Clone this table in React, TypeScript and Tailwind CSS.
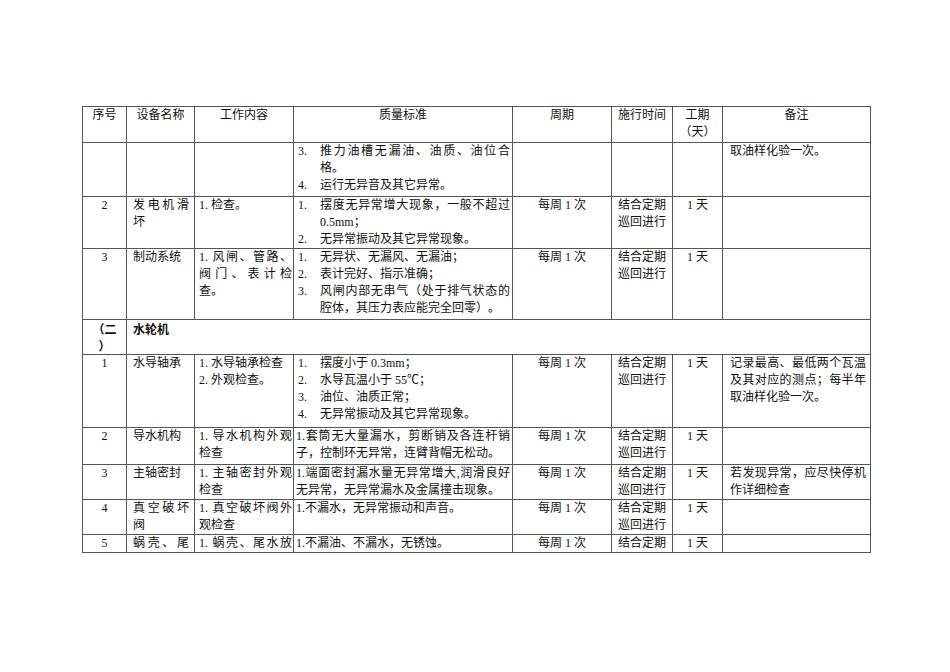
import React from 'react';

// one visual line, spread to the full cell width (the reference is a justified Word table)
const J = ({ children }: { children: React.ReactNode }) => (
    <div className="text-justify [text-align-last:justify]">{children}</div>
);

const L = ({ children }: { children: React.ReactNode }) => <div>{children}</div>;

// numbered item with hanging indent
const Item = ({ n, children }: { n: string; children: React.ReactNode }) => (
    <div className="flex">
        <span className="w-[24px] shrink-0 pl-[2px]">{n}.</span>
        <div className="flex-1">{children}</div>
    </div>
);

const td = 'border border-[#555] align-top p-0';
const c1 = `${td} text-center`;
const c2 = `${td} pl-[6px] pr-[5px]`;
const c3 = `${td} pl-[4px] pr-px`;
const c4 = `${td} pl-[2px] pr-[2px]`;
const cc = `${td} text-center`;
const c8 = `${td} pl-[7px] pr-[4px]`;

const Period = () => (
    <>
        <td className={cc}>每周 1 次</td>
        <td className={cc}>
            <L>结合定期</L>
            <L>巡回进行</L>
        </td>
        <td className={cc}>1 天</td>
    </>
);

const App: React.FC = () => {
    return (
        <div className="w-[950px] h-[672px] bg-white pt-[106px] pl-[82px] text-[12px] leading-[17px] text-[#111] [text-spacing-trim:space-all] font-['Liberation_Serif','Noto_Sans_CJK_SC',serif]">
            <table className="table-fixed border-collapse w-[788px]">
                <colgroup>
                    <col className="w-[44px]" />
                    <col className="w-[68px]" />
                    <col className="w-[99px]" />
                    <col className="w-[219px]" />
                    <col className="w-[99px]" />
                    <col className="w-[61px]" />
                    <col className="w-[50px]" />
                    <col className="w-[148px]" />
                </colgroup>
                <tbody>
                    <tr className="h-[36px]">
                        <td className={cc}>序号</td>
                        <td className={cc}>设备名称</td>
                        <td className={cc}>工作内容</td>
                        <td className={cc}>质量标准</td>
                        <td className={cc}>周期</td>
                        <td className={cc}>施行时间</td>
                        <td className={cc}>
                            <L>工期</L>
                            <L>（天）</L>
                        </td>
                        <td className={cc}>备注</td>
                    </tr>

                    <tr className="h-[54px]">
                        <td className={c1}></td>
                        <td className={c2}></td>
                        <td className={c3}></td>
                        <td className={c4}>
                            <Item n="3">
                                <J>推力油槽无漏油、油质、油位合</J>
                                <L>格。</L>
                            </Item>
                            <Item n="4">运行无异音及其它异常。</Item>
                        </td>
                        <td className={cc}></td>
                        <td className={cc}></td>
                        <td className={cc}></td>
                        <td className={c8}>取油样化验一次。</td>
                    </tr>

                    <tr className="h-[52px]">
                        <td className={c1}>2</td>
                        <td className={c2}>
                            <J>发电机滑</J>
                            <L>坏</L>
                        </td>
                        <td className={c3}>1. 检查。</td>
                        <td className={c4}>
                            <Item n="1">
                                <J>摆度无异常增大现象，一般不超过</J>
                                <L>0.5mm；</L>
                            </Item>
                            <Item n="2">无异常振动及其它异常现象。</Item>
                        </td>
                        <Period />
                        <td className={c8}></td>
                    </tr>

                    <tr className="h-[71px]">
                        <td className={c1}>3</td>
                        <td className={c2}>制动系统</td>
                        <td className={c3}>
                            <J>1. 风闸、管路、</J>
                            <J>阀门、表计检</J>
                            <L>查。</L>
                        </td>
                        <td className={c4}>
                            <Item n="1">无异状、无漏风、无漏油；</Item>
                            <Item n="2">表计完好、指示准确；</Item>
                            <Item n="3">
                                <J>风闸内部无串气（处于排气状态的</J>
                                <L>腔体，其压力表应能完全回零）。</L>
                            </Item>
                        </td>
                        <Period />
                        <td className={c8}></td>
                    </tr>

                    <tr className="h-[34px]">
                        <td className={`${c1} font-bold font-['Noto_Sans_CJK_SC',sans-serif]`}>
                            <L>（二</L>
                            <L>）</L>
                        </td>
                        <td colSpan={7} className={`${c2} font-bold font-['Noto_Sans_CJK_SC',sans-serif]`}>
                            水轮机
                        </td>
                    </tr>

                    <tr className="h-[73px]">
                        <td className={c1}>1</td>
                        <td className={c2}>水导轴承</td>
                        <td className={c3}>
                            <L>1. 水导轴承检查</L>
                            <L>2. 外观检查。</L>
                        </td>
                        <td className={c4}>
                            <Item n="1">摆度小于 0.3mm；</Item>
                            <Item n="2">水导瓦温小于 55℃；</Item>
                            <Item n="3">油位、油质正常；</Item>
                            <Item n="4">无异常振动及其它异常现象。</Item>
                        </td>
                        <Period />
                        <td className={c8}>
                            <J>记录最高、最低两个瓦温</J>
                            <J>及其对应的测点；每半年</J>
                            <L>取油样化验一次。</L>
                        </td>
                    </tr>

                    <tr className="h-[37px]">
                        <td className={c1}>2</td>
                        <td className={c2}>导水机构</td>
                        <td className={c3}>
                            <J>1. 导水机构外观</J>
                            <L>检查</L>
                        </td>
                        <td className={c4}>
                            <J>1.套筒无大量漏水，剪断销及各连杆销</J>
                            <L>子，控制环无异常，连臂背帽无松动。</L>
                        </td>
                        <Period />
                        <td className={c8}></td>
                    </tr>

                    <tr className="h-[35px]">
                        <td className={c1}>3</td>
                        <td className={c2}>主轴密封</td>
                        <td className={c3}>
                            <J>1. 主轴密封外观</J>
                            <L>检查</L>
                        </td>
                        <td className={c4}>
                            <J>1.端面密封漏水量无异常增大,润滑良好</J>
                            <L>无异常，无异常漏水及金属撞击现象。</L>
                        </td>
                        <Period />
                        <td className={c8}>
                            <J>若发现异常，应尽快停机</J>
                            <L>作详细检查</L>
                        </td>
                    </tr>

                    <tr className="h-[35px]">
                        <td className={c1}>4</td>
                        <td className={c2}>
                            <J>真空破坏</J>
                            <L>阀</L>
                        </td>
                        <td className={c3}>
                            <J>1. 真空破坏阀外</J>
                            <L>观检查</L>
                        </td>
                        <td className={c4}>1.不漏水，无异常振动和声音。</td>
                        <Period />
                        <td className={c8}></td>
                    </tr>

                    {/* the page cuts this row after its first line */}
                    <tr className="h-[18px]">
                        <td className={c1}>5</td>
                        <td className={c2}>
                            <J>蜗壳、尾</J>
                        </td>
                        <td className={c3}>
                            <J>1. 蜗壳、尾水放</J>
                        </td>
                        <td className={c4}>1.不漏油、不漏水，无锈蚀。</td>
                        <td className={cc}>每周 1 次</td>
                        <td className={cc}>结合定期</td>
                        <td className={cc}>1 天</td>
                        <td className={c8}></td>
                    </tr>
                </tbody>
            </table>
        </div>
    );
};

export default App;
